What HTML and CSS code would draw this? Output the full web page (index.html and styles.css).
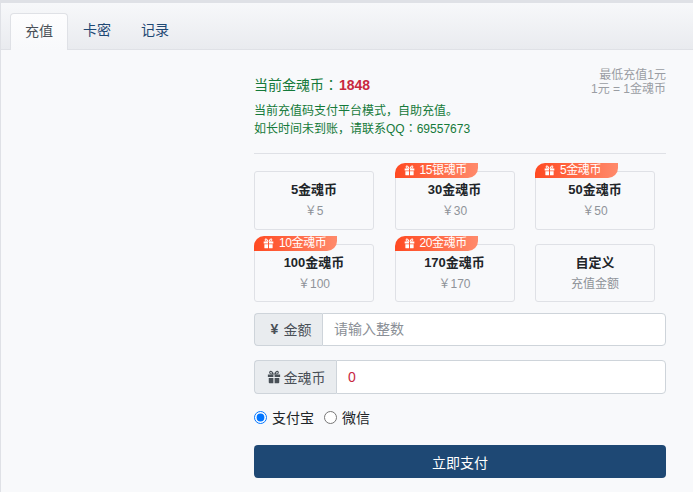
FILE: index.html
```html
<!DOCTYPE html>
<html lang="zh">
<head>
<meta charset="utf-8">
<title>充值</title>
<link rel="stylesheet" href="styles.css">
</head>
<body>
<svg class="defs" width="0" height="0" aria-hidden="true">
  <symbol id="gift" viewBox="0 0 16 16">
    <path d="M1 5h6.300v3H1zM8.700 5H15v3H8.700zM2 9h5.300v6H3a1 1 0 0 1-1-1zM8.700 9H14v5a1 1 0 0 1-1 1H8.700z"/>
    <path fill-rule="evenodd" d="M8 5C7 2 5.500.6 4 .8 2.300 1 2 3 3 4.200 3.500 4.800 4.300 5 5 5zM4.700 2.300c-1-.2-1.400.9-.7 1.400.3.200.8.300 1.800.300-.3-.9-.6-1.600-1.100-1.700zM8 5c1-3 2.500-4.400 4-4.200 1.700.2 2 2.200 1 3.400-.5.600-1.300.8-2 .8zM11.300 2.300c1-.2 1.400.9.700 1.400-.3.200-.8.300-1.800.300.3-.9.600-1.600 1.100-1.700z"/>
  </symbol>
</svg>
<div class="panel">
  <nav class="tabs">
    <a class="tab active">充值</a>
    <a class="tab">卡密</a>
    <a class="tab">记录</a>
  </nav>
  <main class="content">
    <header class="summary">
      <div class="balance-block">
        <div class="balance">当前金魂币<span lang="zh-TW">：</span><strong>1848</strong></div>
        <p class="note">当前充值码支付平台模式，自助充值。<br>如长时间未到账，请联系QQ<span lang="zh-TW">：</span>69557673</p>
      </div>
      <div class="limits">最低充值1元<br>1元 = 1金魂币</div>
    </header>
    <hr class="rule">
    <section class="cards">
      <div class="card"><b>5金魂币</b><span>￥5</span></div>
      <div class="card"><i class="badge"><svg><use href="#gift"/></svg>15银魂币</i><b>30金魂币</b><span>￥30</span></div>
      <div class="card"><i class="badge"><svg><use href="#gift"/></svg>5金魂币</i><b>50金魂币</b><span>￥50</span></div>
      <div class="card"><i class="badge"><svg><use href="#gift"/></svg>10金魂币</i><b>100金魂币</b><span>￥100</span></div>
      <div class="card"><i class="badge"><svg><use href="#gift"/></svg>20金魂币</i><b>170金魂币</b><span>￥170</span></div>
      <div class="card"><b>自定义</b><span>充值金额</span></div>
    </section>
    <div class="field first">
      <label class="addon"><strong class="yen">¥</strong>金额</label>
      <input class="control" type="text" placeholder="请输入整数">
    </div>
    <div class="field second">
      <label class="addon"><svg class="addon-gift"><use href="#gift"/></svg>金魂币</label>
      <input class="control amount" type="text" value="0">
    </div>
    <div class="pay">
      <label><input type="radio" name="pay" checked>支付宝</label>
      <label><input type="radio" name="pay">微信</label>
    </div>
    <button class="submit" type="button">立即支付</button>
  </main>
</div>
</body>
</html>
```
FILE: styles.css
```css
* { box-sizing: border-box; }
html, body { margin: 0; height: 100%; }
body {
  background: #dfe1e6;
  padding: 3px 0 0 1px;
  font-family: "Liberation Sans", "Noto Sans CJK SC", sans-serif;
  font-size: 14px;
  color: #212529;
  overflow: hidden;
}
[lang="zh-TW"] { font-family: "Noto Sans CJK TC", sans-serif; line-height: 0; }
.defs { position: absolute; }
.panel { background: #f8f9fb; height: 489px; }
.tabs {
  display: flex;
  height: 47px;
  padding: 10px 0 0 9px;
  background: linear-gradient(#f7f8fa, #e9ebef);
  border-bottom: 1px solid #dfe1e6;
}
.tab {
  width: 58px;
  height: 37px;
  line-height: 35px;
  text-align: center;
  color: #1e4874;
}
.active {
  color: #495057;
  background: linear-gradient(#fdfdfe, #f8f9fb);
  border: 1px solid #dfe1e6;
  border-bottom: 0;
  border-radius: 4px 4px 0 0;
}
.content { padding: 18px 27px 0 253px; }
.summary { display: flex; justify-content: space-between; }
.balance { font-size: 14px; line-height: 20px; padding-top: 7px; color: #157a3a; }
.balance strong { margin-left: 1px; color: #c8283f; }
.note { margin: 7px 0 0; font-size: 12px; line-height: 18px; color: #157a3a; }
.limits { font-size: 12px; line-height: 14px; text-align: right; color: #9a9da3; }
.rule { margin: 15px 0 0; border: 0; border-top: 1px solid #dfe1e6; }
.cards {
  display: grid;
  grid-template-columns: repeat(3, 120px);
  grid-template-rows: 59px 58px;
  column-gap: 20.5px;
  row-gap: 14px;
  margin-top: 17px;
}
.card {
  position: relative;
  display: flex;
  flex-direction: column;
  align-items: center;
  padding-top: 9px;
  border: 1px solid #dfe1e6;
  border-radius: 3px;
}
.card b { font-size: 13px; line-height: 18px; color: #212529; }
.card span { margin-top: 3px; font-size: 12px; line-height: 18px; color: #8f9399; }
.badge {
  position: absolute;
  left: -1px;
  top: -9px;
  display: flex;
  align-items: center;
  width: 83px;
  height: 15px;
  padding: 0 0 1px 9px;
  font-style: normal;
  font-size: 12px;
  line-height: 14px;
  letter-spacing: -.4px;
  white-space: nowrap;
  color: #fff;
  background: linear-gradient(90deg, #ff4a22, #ff8a6b);
  border-radius: 10px 0 10px 0;
}
.badge svg { width: 11px; height: 11px; margin-right: 5px; fill: #fff; flex: none; }
.field { display: flex; }
.first { margin-top: 11px; height: 33px; }
.second { margin-top: 14px; height: 34px; }
.addon {
  display: flex;
  align-items: center;
  justify-content: center;
  flex: none;
  color: #495057;
  background: #e9ecef;
  border: 1px solid #ced4da;
  border-right: 0;
  border-radius: 4px 0 0 4px;
}
.first .addon { width: 68px; padding: 0 0 2px 5px; }
.second .addon { width: 82px; padding: 0 0 1px 1px; }
.yen { margin-right: 5px; }
.addon-gift { width: 14px; height: 14px; fill: #495057; margin-right: 3px; }
.control {
  flex: 1;
  min-width: 0;
  padding: 0 11px;
  font: inherit;
  color: #c8283f;
  background: #fff;
  border: 1px solid #ced4da;
  border-radius: 0 4px 4px 0;
  outline: 0;
}
.first .control { padding-bottom: 2px; }
.control::placeholder { color: #8a8f96; }
.pay { display: flex; gap: 10px; margin-top: 13px; height: 20px; align-items: center; }
.pay label { display: flex; align-items: center; gap: 5px; color: #212529; }
.pay input { width: 13px; height: 13px; margin: 0; }
.submit {
  display: block;
  width: 100%;
  height: 33px;
  margin-top: 18px;
  font: inherit;
  color: #fff;
  background: #1e4874;
  border: 0;
  border-radius: 4px;
}
```
